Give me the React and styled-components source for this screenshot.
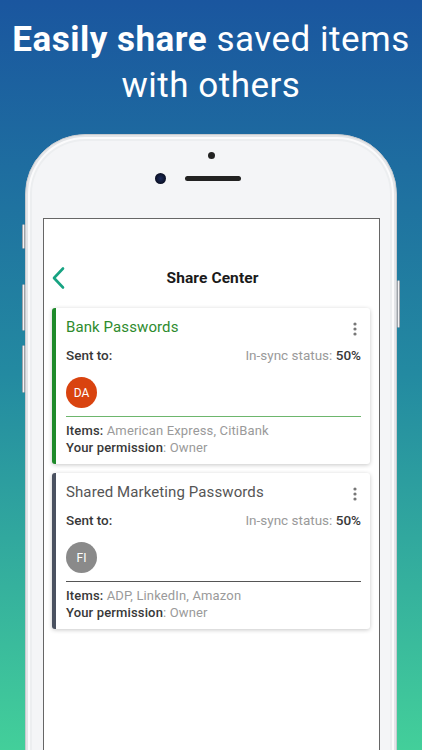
import React from "react";
import styled, { createGlobalStyle } from "styled-components";

const Global = createGlobalStyle`
  html, body { margin: 0; padding: 0; }
  body { font-family: Roboto, "Noto Sans", sans-serif; }
`;

const Page = styled.div`
  width: 422px;
  height: 750px;
  overflow: hidden;
  background: linear-gradient(180deg, #1a569f 0%, #238aa1 50%, #43cf9a 100%);
  display: flex;
  flex-direction: column;
  align-items: center;
`;

const Headline = styled.h1`
  margin: 0;
  padding-top: 17px;
  color: #fff;
  font-family: Roboto, sans-serif;
  font-weight: 400;
  font-size: 35px;
  line-height: 46px;
  text-align: center;
  letter-spacing: 0.5px;
  white-space: nowrap;
  b { font-weight: 700; }
`;

const Phone = styled.div`
  position: relative;
  margin-top: 25px;
  width: 372px;
  height: 700px;
  flex-shrink: 0;
  box-sizing: border-box;
  border-radius: 60px;
  background: #f4f5f7;
  border: 1px solid #c7cace;
  box-shadow: inset 0 0 0 2px #e3e5e8, inset 0 0 0 4px #fbfbfc, inset 0 0 0 6px #eceef0;
  display: flex;
  flex-direction: column;
  align-items: center;
`;

const SideButton = styled.span`
  position: absolute;
  width: 3px;
  top: ${(p) => p.top}px;
  height: ${(p) => p.h}px;
  ${(p) => (p.right ? "right: -4px;" : "left: -4px;")}
  background: #f2f3f5;
  border: 1px solid #9ea3a9;
  border-radius: 2px;
  box-sizing: border-box;
`;

const Sensors = styled.div`
  position: relative;
  width: 100%;
  height: 83px;
  flex-shrink: 0;
`;

const Dot = styled.span`
  position: absolute;
  left: 182px;
  top: 17px;
  width: 7px;
  height: 7px;
  border-radius: 50%;
  background: #222;
`;

const Camera = styled.span`
  position: absolute;
  left: 129px;
  top: 38px;
  width: 11px;
  height: 11px;
  border-radius: 50%;
  background: radial-gradient(circle at 50% 50%, #1b2a5a 0%, #0b1024 70%);
`;

const Speaker = styled.span`
  position: absolute;
  left: 159px;
  top: 41px;
  width: 56px;
  height: 5px;
  border-radius: 3px;
  background: #222;
`;

const Screen = styled.div`
  width: 337px;
  flex: 1;
  margin-left: 1px;
  background: #fff;
  border: 1px solid #666;
  border-bottom: none;
  box-sizing: border-box;
  font-family: Roboto, "Noto Sans", sans-serif;
`;

const Header = styled.div`
  position: relative;
  height: 22px;
  margin-top: 48px;
  display: flex;
  align-items: center;
  justify-content: center;
`;

const Back = styled.svg`
  position: absolute;
  left: 7px;
  top: -1px;
`;

const Title = styled.div`
  font-size: 15.5px;
  font-weight: 700;
  color: #1a1a1a;
  margin-left: 2px;
  letter-spacing: 0.1px;
`;

const List = styled.div`
  display: flex;
  flex-direction: column;
  gap: 9px;
  padding: 19px 9px 0 8px;
`;

const Card = styled.div`
  border-left: 4px solid ${(p) => p.accent};
  border-radius: 3px;
  background: #fff;
  box-shadow: 0 1px 4px rgba(0, 0, 0, 0.22);
  padding: 10px 9px 8px 10px;
`;

const CardTop = styled.div`
  display: flex;
  justify-content: space-between;
  align-items: center;
  height: 18px;
`;

const CardTitle = styled.div`
  font-size: 15px;
  color: ${(p) => p.color};
  letter-spacing: 0.1px;
`;

const Kebab = styled.svg`
  margin-right: 4px;
  margin-top: 4px;
`;

const Row = styled.div`
  display: flex;
  justify-content: space-between;
  align-items: center;
  margin-top: 10px;
  height: 18px;
  font-size: 13.5px;
`;

const Strong = styled.span`
  font-weight: 500;
  color: #383838;
`;

const Muted = styled.span`
  color: #9a9a9a;
`;

const Avatar = styled.div`
  margin-top: 13px;
  width: 31px;
  height: 31px;
  border-radius: 50%;
  background: ${(p) => p.bg};
  color: #fff;
  font-size: 12px;
  display: flex;
  align-items: center;
  justify-content: center;
`;

const Divider = styled.div`
  height: 1px;
  margin-top: 8px;
  background: ${(p) => p.color};
`;

const Info = styled.div`
  font-size: 13px;
  line-height: 17px;
  letter-spacing: 0.15px;
  margin-top: ${(p) => p.mt || 0}px;
`;

const shares = [
  {
    title: "Bank Passwords",
    titleColor: "#2e8b2e",
    accent: "#1e8a2a",
    avatar: "DA",
    avatarBg: "#d9430f",
    divider: "#6db66d",
    items: "American Express, CitiBank",
  },
  {
    title: "Shared Marketing Passwords",
    titleColor: "#555",
    accent: "#4a5160",
    avatar: "FI",
    avatarBg: "#8a8a8a",
    divider: "#555",
    items: "ADP, LinkedIn, Amazon",
  },
];

export default function App() {
  return (
    <Page>
      <Global />
      <Headline>
        <b>Easily share</b> saved items
        <br />
        with others
      </Headline>
      <Phone>
        <SideButton top={89} h={25} />
        <SideButton top={149} h={47} />
        <SideButton top={210} h={48} />
        <SideButton right top={145} h={48} />
        <Sensors>
          <Dot />
          <Camera />
          <Speaker />
        </Sensors>
        <Screen>
          <Header>
            <Back width="16" height="24" viewBox="0 0 16 24">
              <path d="M12 2.5 L3 12 L12 21.5" fill="none" stroke="#17a382" strokeWidth="2.6" strokeLinecap="round" strokeLinejoin="round" />
            </Back>
            <Title>Share Center</Title>
          </Header>
          <List>
            {shares.map((s) => (
              <Card key={s.title} accent={s.accent}>
                <CardTop>
                  <CardTitle color={s.titleColor}>{s.title}</CardTitle>
                  <Kebab width="4" height="14" viewBox="0 0 4 14">
                    <circle cx="2" cy="2" r="1.6" fill="#777" />
                    <circle cx="2" cy="7" r="1.6" fill="#777" />
                    <circle cx="2" cy="12" r="1.6" fill="#777" />
                  </Kebab>
                </CardTop>
                <Row>
                  <Strong>Sent to:</Strong>
                  <span>
                    <Muted>In-sync status: </Muted>
                    <Strong>50%</Strong>
                  </span>
                </Row>
                <Avatar bg={s.avatarBg}>{s.avatar}</Avatar>
                <Divider color={s.divider} />
                <Info mt={5}>
                  <Strong>Items:</Strong> <Muted>{s.items}</Muted>
                </Info>
                <Info>
                  <Strong>Your permission</Strong>
                  <Muted>: Owner</Muted>
                </Info>
              </Card>
            ))}
          </List>
        </Screen>
      </Phone>
    </Page>
  );
}
